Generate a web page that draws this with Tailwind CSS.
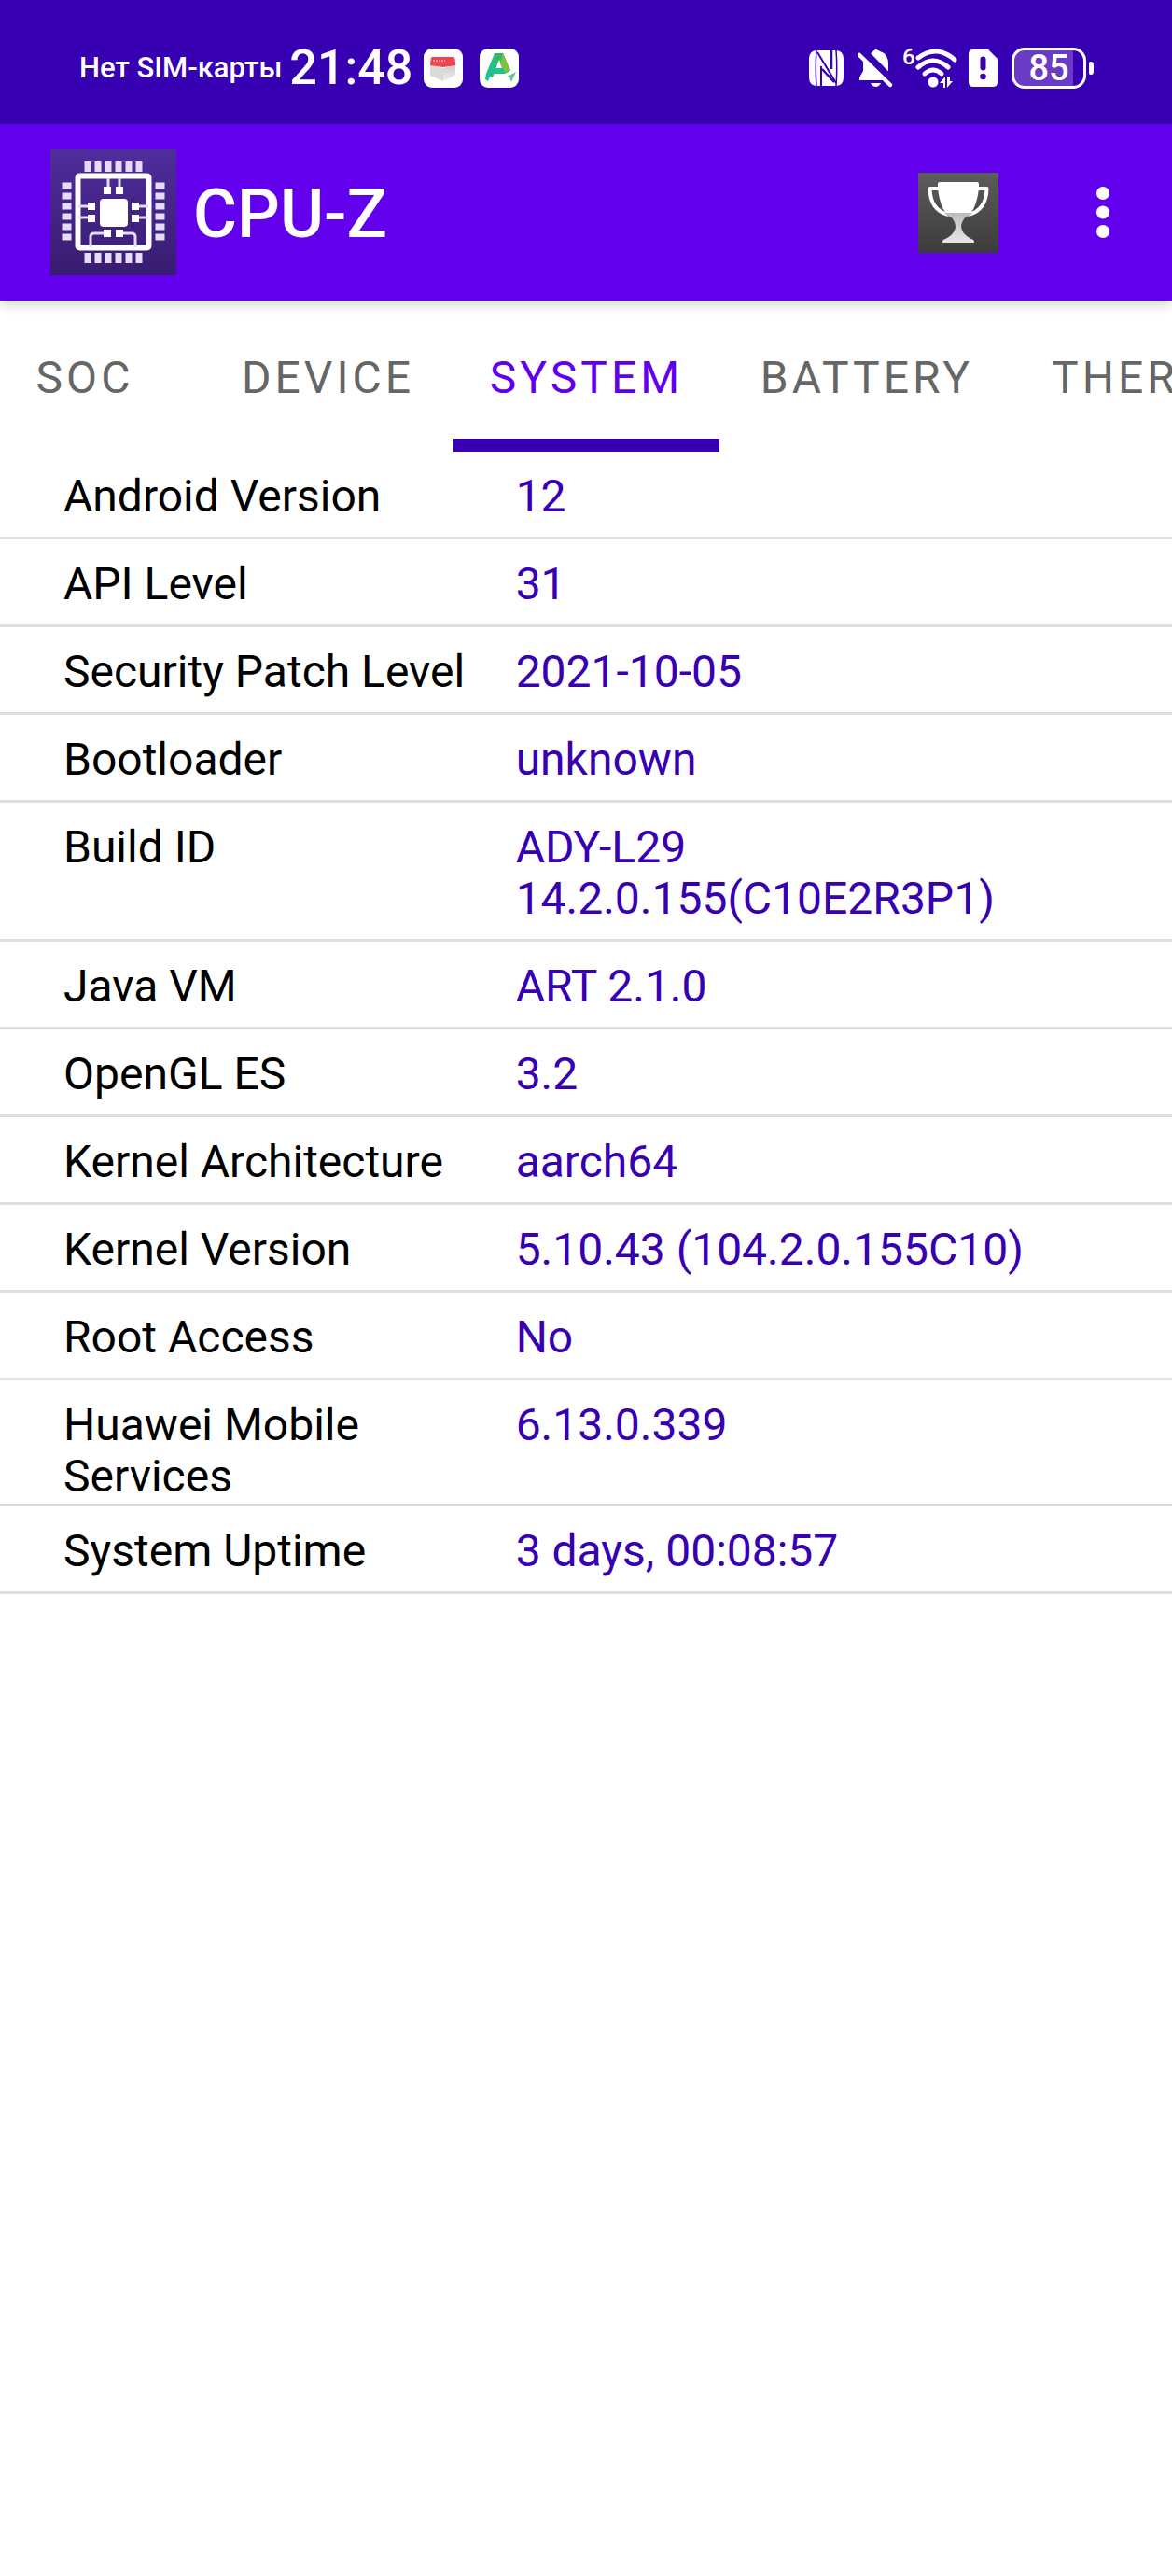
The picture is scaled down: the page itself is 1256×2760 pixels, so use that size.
<!DOCTYPE html>
<html lang="en">
<head>
<meta charset="utf-8">
<meta name="viewport" content="width=device-width, initial-scale=1">
<title>CPU-Z</title>
<script src="https://cdn.jsdelivr.net/npm/@tailwindcss/browser@4"></script>
</head>
<body class="min-h-screen overflow-x-hidden bg-white font-['Roboto',sans-serif] text-black">

<!-- Status bar -->
<div class="flex h-[133px] items-center justify-between bg-[#3700b3] pt-3 pr-[84px] pl-[85px] text-white">
  <div class="flex items-center">
    <span class="text-[31px] leading-none font-medium">Нет SIM-карты</span>
    <time class="ml-2 text-[52px] leading-none font-medium">21:48</time>
    <svg class="ml-3 size-[42px]" viewBox="0 0 42 42" aria-hidden="true">
      <defs><linearGradient id="box" x1="0" y1="0" x2="0" y2="1"><stop offset="0" stop-color="#c9c9c9"/><stop offset="1" stop-color="#f0f0f0"/></linearGradient></defs>
      <rect width="42" height="42" rx="9" fill="#fff"/>
      <path d="M7 17l14 4v14L8 29.500q-1-.5-1-2z" fill="#dadada"/>
      <path d="M34 17l-13 4v14l12-5.500q1-.5 1-2z" fill="url(#box)"/>
      <path d="M9.500 9h22q2 0 2 2l.8 7L21 20 7 18l.7-7q.2-2 1.800-2z" fill="#ee4450"/>
      <path d="M10 13h13" stroke="#f9a7ac" stroke-width="1.500" stroke-dasharray="2 1"/>
    </svg>
    <svg class="ml-[18px] size-[42px]" viewBox="0 0 42 42" aria-hidden="true">
      <rect width="42" height="42" rx="9" fill="#fff"/>
      <path d="M16 5h7l-9 26-3-1-2 5-3-2 1-6z" fill="#1fc28c"/>
      <path d="M16 5h9l8 19-6 3-6-15-5 10z" fill="#35b56a"/>
      <path d="M25 5l8 18-7 4-4-11z" fill="#7cc044"/>
      <path d="M14 21h11l2 6H12z" fill="#1fc28c"/>
      <path d="M39 25l-5 11-2-5-3-1z" fill="#68c795"/>
    </svg>
  </div>
  <div class="flex items-center">
    <svg class="h-[42px] w-[38px]" viewBox="0 0 38 42" aria-hidden="true">
      <path d="M9 2h19q9 0 9 9v20q0 9-9 9H9q-9 0-9-9V11q0-9 9-9z" fill="#fff"/>
      <path d="M8 2q-1.500 18 0 38M29 2q1.500 18 0 38" fill="none" stroke="#3700b3" stroke-width="1.500"/>
      <path d="M9 4L29 37M13 19v21" fill="none" stroke="#3700b3" stroke-width="2"/>
      <path d="M14 22l13 14M24 2v20" fill="none" stroke="#3700b3" stroke-width="2.500"/>
    </svg>
    <svg class="ml-[14px] h-[42px] w-[38px]" viewBox="0 0 38 42" aria-hidden="true">
      <path d="M6 12v12L2 31v3h29z" fill="#fff"/>
      <path d="M14 5q2-1 3-2.500 3-3 6 0 10 3 10 14v8z" fill="#fff"/>
      <path d="M2 7l33 32" stroke="#fff" stroke-width="4.500" stroke-linecap="round"/>
      <path d="M14 37h11q-2 4-5.500 4T14 37z" fill="#fff"/>
    </svg>
    <div class="relative ml-[11px]">
      <svg class="h-[42px] w-[60px]" viewBox="0 0 60 42" aria-hidden="true">
        <g fill="none" stroke="#fff" stroke-width="5" stroke-linecap="round">
          <path d="M16 10Q36-5 55 12"/><path d="M16 20Q32 6 48 20"/><path d="M23 27Q32 19 41 27"/>
        </g>
        <circle cx="32" cy="36" r="5.500" fill="#fff"/>
        <path d="M39 37l6-7v12h-2v-5zM47 30v12l6-7h-3v-5z" fill="#fff"/>
      </svg>
      <span class="absolute -top-[2px] -left-px bg-[#3700b3] text-[24px] leading-[22px] font-medium">6</span>
    </div>
    <svg class="ml-[10px] h-[42px] w-[32px]" viewBox="0 0 32 42" aria-hidden="true">
      <path d="M5 1h16L31 11v25q0 5-5 5H5q-5 0-5-5V6q0-5 5-5z" fill="#fff"/>
      <path d="M15.500 11.500v9" stroke="#3700b3" stroke-width="6" stroke-linecap="round"/><circle cx="15.500" cy="30" r="3.300" fill="#3700b3"/>
    </svg>
    <div class="ml-[14px] flex items-center">
      <div class="flex h-[44px] w-[80px] items-center justify-center rounded-[14px] border-[3px] border-white bg-linear-to-r from-[#6a3bc4] from-85% to-[#3700b3] to-85% text-[38px] leading-none font-medium">85</div>
      <div class="ml-[3px] h-[14px] w-[5px] rounded-r-[4px] rounded-l-[2px] bg-white"></div>
    </div>
  </div>
</div>

<!-- App bar -->
<header class="relative flex h-[189px] items-center bg-[#6200ee] pr-[54px] pl-[54px] text-white shadow-[0_4px_12px_rgba(0,0,0,0.18)]">
  <svg class="size-[135px]" viewBox="0 0 135 135" aria-hidden="true">
    <defs><linearGradient id="chip" x1="0" y1="0" x2="0" y2="1"><stop offset="0" stop-color="#4f2d9c"/><stop offset="1" stop-color="#391b70"/></linearGradient></defs>
    <rect width="135" height="135" fill="url(#chip)"/>
    <g fill="none" stroke="#e6dcf8">
      <path d="M36.500 18.500h63M36.500 116.500h63" stroke-width="11" stroke-dasharray="7 4"/>
      <path d="M17.500 35.500v63M117.500 35.500v63" stroke-width="10" stroke-dasharray="7 4"/>
      <rect x="29.500" y="28.500" width="76" height="77" rx="2" stroke="#fff" stroke-width="6"/>
      <path d="M62 31v14M74 31v14M30 61h15M30 73h15M90 61h15M90 73h15M61 90H47q-4 0-4 4v11M74 90h13q4 0 4 4v11" stroke-width="3"/>
    </g>
    <path d="M57 40h8v8h-8zM70 40h8v8h-8zM40 57h8v8h-8zM40 70h8v8h-8zM87 57h8v8h-8zM87 70h8v8h-8zM57 86h8v8h-8zM70 86h8v8h-8z" fill="#fff"/>
    <rect x="53" y="53" width="30" height="30" rx="4" fill="#fff"/>
  </svg>
  <h1 class="ml-[18px] pt-1 text-[72px] leading-none font-medium">CPU-Z</h1>
  <button type="button" aria-label="Ranking" class="ml-auto">
    <svg class="size-[86px]" viewBox="0 0 86 86" aria-hidden="true">
      <defs>
        <linearGradient id="plate" x1="0" y1="0" x2="0" y2="1"><stop offset="0" stop-color="#5c5c5c"/><stop offset="1" stop-color="#3c3c3c"/></linearGradient>
        <linearGradient id="stem" x1="0" y1="0" x2="0" y2="1"><stop offset="0" stop-color="#bdbdbd"/><stop offset="1" stop-color="#e6e6e6"/></linearGradient>
      </defs>
      <rect width="86" height="86" fill="url(#plate)"/>
      <path d="M23 17H12.500Q13 40 32 45M63 17H73.500Q73 40 54 45" fill="none" stroke="#fff" stroke-width="4" stroke-linejoin="round"/>
      <path d="M23 10h40q2 0 2 2v5q-2 18-9 27H30Q23 35 21 17v-5q0-2 2-2z" fill="#fff"/>
      <path d="M28 43h30q-3 4-7 4-5 6-5 11 1 9 13 14 1 0 1 3H26q0-3 1-3 12-5 13-14 0-5-5-11-4 0-7-4z" fill="url(#stem)"/>
    </svg>
  </button>
  <button type="button" aria-label="More options" class="ml-[92px] flex w-[40px] justify-center">
    <svg class="h-[56px] w-[14px]" viewBox="0 0 14 56" aria-hidden="true"><g fill="#fff"><circle cx="7" cy="7" r="7"/><circle cx="7" cy="27.500" r="7"/><circle cx="7" cy="48" r="7"/></g></svg>
  </button>
</header>

<!-- Tabs, scrolled so that the active one is near the middle -->
<nav class="flex h-[162px] overflow-hidden text-[48px] leading-none tracking-[4px] whitespace-nowrap text-[#666]">
  <a href="#soc" class="-ml-[35px] flex w-[252px] shrink-0 items-center justify-center pt-1">SOC</a>
  <a href="#device" class="flex w-[269px] shrink-0 items-center justify-center pt-1">DEVICE</a>
  <a href="#system" aria-current="page" class="flex w-[285px] shrink-0 items-center justify-center border-b-[14px] border-[#3700b3] pt-[18px] text-[#6200ee]">SYSTEM</a>
  <a href="#battery" class="flex w-[316px] shrink-0 items-center justify-center pt-1">BATTERY</a>
  <a href="#thermal" class="flex shrink-0 items-center px-[40px] pt-1">THERMAL</a>
</nav>

<!-- System information -->
<table class="w-full table-fixed border-collapse text-left text-[48px] leading-[55px] [&_td]:pt-5 [&_td]:pr-[54px] [&_td]:pb-4 [&_td]:align-top [&_td]:text-[#3700b3] [&_th]:w-[44%] [&_th]:pt-5 [&_th]:pr-[40px] [&_th]:pb-[2px] [&_th]:pl-[68px] [&_th]:align-top [&_th]:font-normal [&_tr]:border-b-[3px] [&_tr]:border-[#dfdfdf]">
  <tbody>
    <tr><th scope="row">Android Version</th><td>12</td></tr>
    <tr><th scope="row">API Level</th><td>31</td></tr>
    <tr><th scope="row">Security Patch Level</th><td>2021-10-05</td></tr>
    <tr><th scope="row">Bootloader</th><td>unknown</td></tr>
    <tr><th scope="row">Build ID</th><td>ADY-L29<br>14.2.0.155(C10E2R3P1)</td></tr>
    <tr><th scope="row">Java VM</th><td>ART 2.1.0</td></tr>
    <tr><th scope="row">OpenGL ES</th><td>3.2</td></tr>
    <tr><th scope="row">Kernel Architecture</th><td>aarch64</td></tr>
    <tr><th scope="row">Kernel Version</th><td>5.10.43 (104.2.0.155C10)</td></tr>
    <tr><th scope="row">Root Access</th><td>No</td></tr>
    <tr><th scope="row">Huawei Mobile Services</th><td>6.13.0.339</td></tr>
    <tr><th scope="row">System Uptime</th><td>3 days, 00:08:57</td></tr>
  </tbody>
</table>
</body>
</html>
